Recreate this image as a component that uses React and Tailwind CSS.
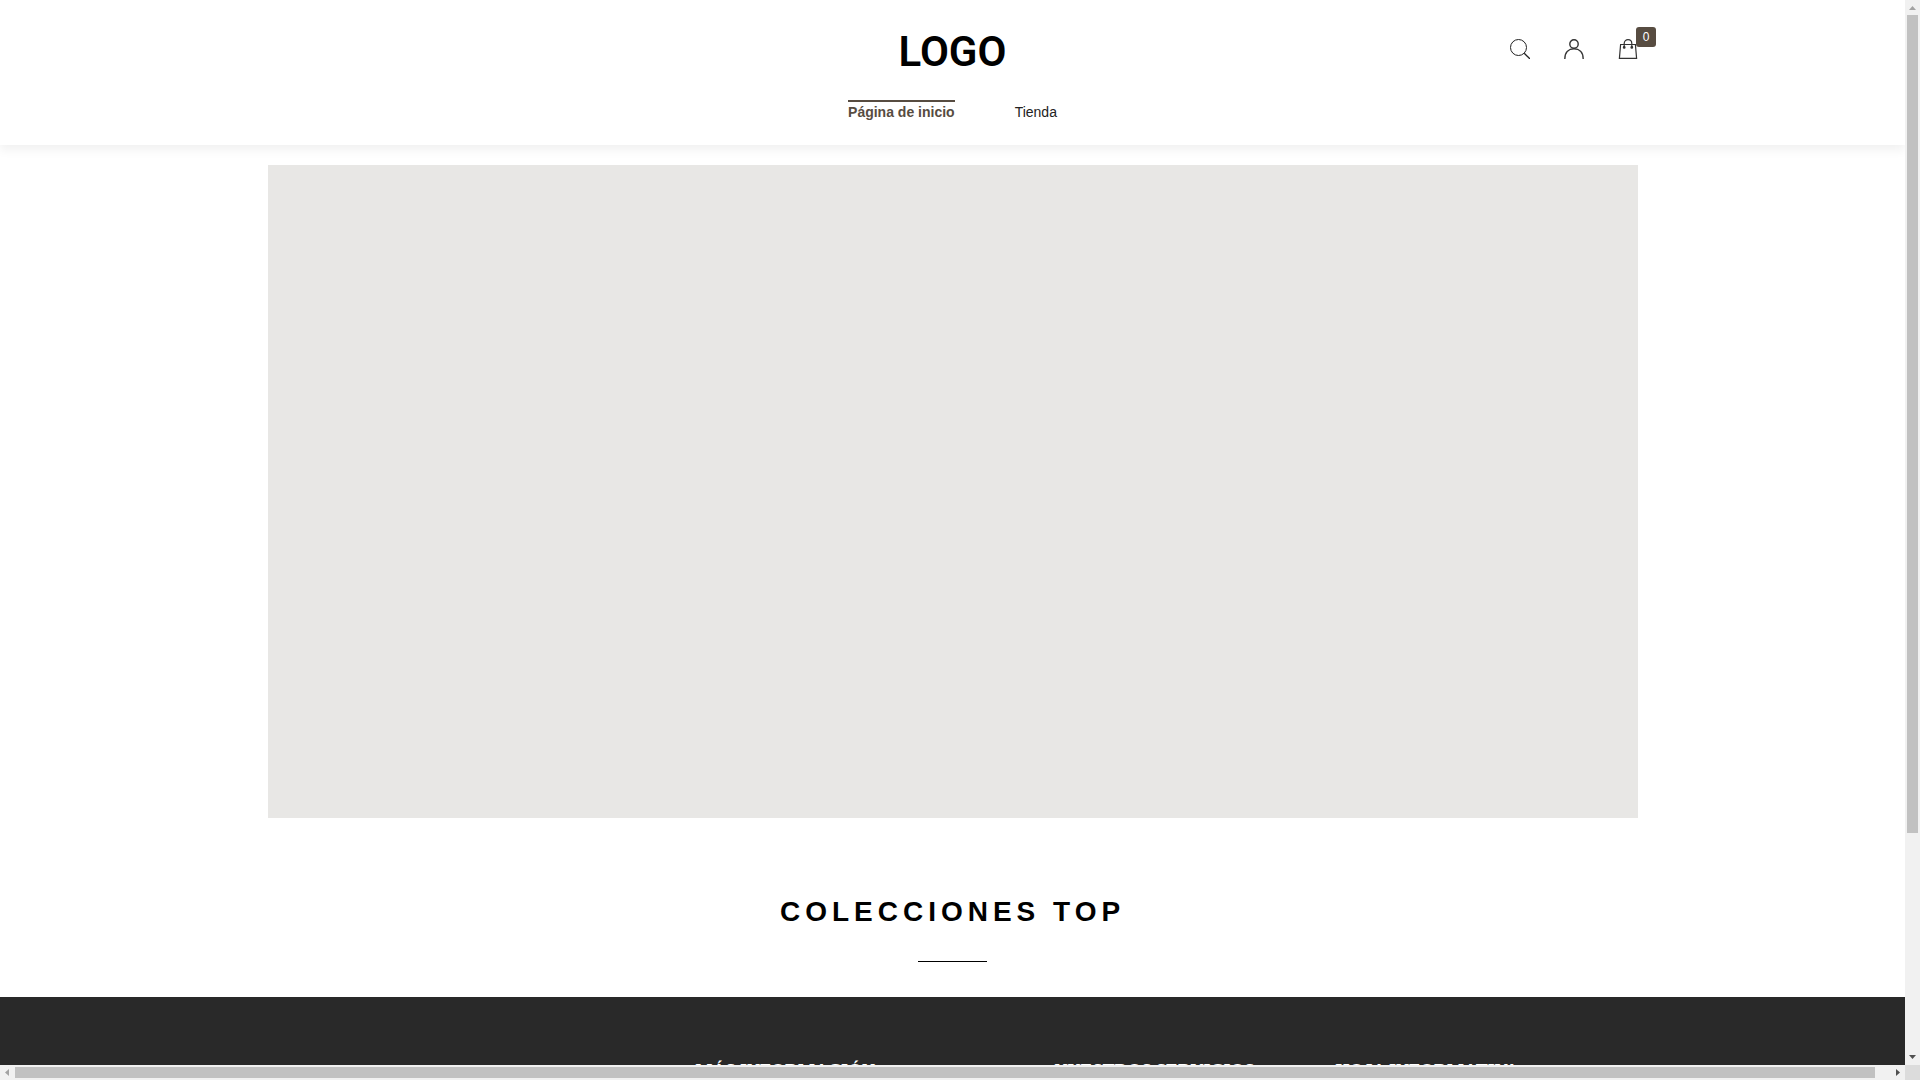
import React from 'react'

const navItems = [
  { label: 'Página de inicio', active: true },
  { label: 'Tienda', active: false },
]

const SearchIcon = () => (
  <svg width="20" height="20" viewBox="0 0 20 20" fill="none" stroke="#222" strokeWidth="1" aria-hidden="true">
    <circle cx="8.5" cy="8.5" r="8" />
    <path d="M14.2 14.2 L20 20" strokeWidth="1.3" />
  </svg>
)

const UserIcon = () => (
  <svg width="20" height="20" viewBox="0 0 20 20" fill="none" stroke="#333" strokeWidth="1.4" aria-hidden="true">
    <circle cx="10" cy="5" r="4.2" />
    <path d="M0.8 20 C0.8 13 5 9.8 10 9.8 C15 9.8 19.2 13 19.2 20" />
  </svg>
)

const BagIcon = () => (
  <svg width="20" height="20" viewBox="0 0 20 20" fill="none" stroke="#333" strokeWidth="1.2" aria-hidden="true">
    <path d="M2.6 5.5 H17.4 L18.6 19.4 H1.4 Z" />
    <path d="M6.2 8.5 V4.5 C6.2 -0.7 13.8 -0.7 13.8 4.5 V8.5" />
    <circle cx="6.2" cy="8.4" r="0.8" fill="#333" />
    <circle cx="13.8" cy="8.4" r="0.8" fill="#333" />
  </svg>
)

const Header = () => (
  <header className="relative h-[145px] shrink-0 bg-white shadow-[0_5px_10px_rgba(0,0,0,0.06)]">
    <div className="mx-auto grid max-w-[1371px] grid-cols-3 items-start">
      <span />
      <a href="#inicio" className="mt-[26px] h-[52px] text-center font-['Roboto',sans-serif] text-[42px] leading-[52px] font-semibold text-black">
        LOGO
      </a>
      <div className="mt-[39px] flex justify-end gap-[34px]">
        <button type="button" aria-label="Buscar"><SearchIcon /></button>
        <button type="button" aria-label="Mi cuenta"><UserIcon /></button>
        <button type="button" aria-label="Carrito" className="relative">
          <BagIcon />
          <span className="absolute -top-3 left-[18px] h-5 w-5 rounded-[3px] bg-[#574c41] text-center text-xs leading-5 text-white">
            0
          </span>
        </button>
      </div>
    </div>
    <nav className="mt-[22px] flex justify-center gap-[60px] text-sm leading-5">
      {navItems.map((item) => (
        <a
          key={item.label}
          href="#"
          className={item.active
            ? 'border-t-2 border-[#574c41] font-bold text-[#574c41]'
            : 'border-t-2 border-transparent text-[#222]'}
        >
          {item.label}
        </a>
      ))}
    </nav>
  </header>
)

const Footer = () => (
  <footer className="bg-[#292929] font-['Liberation_Serif',serif] text-lg leading-5 font-bold text-white">
    <div className="mx-auto grid max-w-[1370px] grid-cols-[428fr_359fr_281fr_302fr] pt-16">
      <span />
      <h3>MÁS INFORMACIÓN</h3>
      <h3>NUESTROS SERVICIOS</h3>
      <h3>HOJA INFORMATIVA</h3>
    </div>
  </footer>
)

const VerticalBar = () => (
  <div className="flex flex-col items-center justify-between bg-[#f1f1f1]">
    <svg width="15" height="15" viewBox="0 0 15 15" fill="#a3a3a3"><path d="M7.5 6 L11 10 H4 Z" /></svg>
    <div className="w-[11px] flex-1">
      <div className="h-[79%] bg-[#c1c1c1]" />
    </div>
    <svg width="15" height="15" viewBox="0 0 15 15" fill="#505050"><path d="M4 5 H11 L7.5 9 Z" /></svg>
  </div>
)

const HorizontalBar = () => (
  <div className="flex items-center justify-between bg-[#f1f1f1]">
    <svg width="15" height="15" viewBox="0 0 15 15" fill="#a3a3a3"><path d="M9 4 V11 L5 7.5 Z" /></svg>
    <div className="h-[11px] flex-1 pr-[15px]">
      <div className="h-full bg-[#c1c1c1]" />
    </div>
    <svg width="15" height="15" viewBox="0 0 15 15" fill="#505050"><path d="M6 4 V11 L10 7.5 Z" /></svg>
  </div>
)

const App = () => (
  <div className="grid h-screen grid-cols-[minmax(0,1fr)_15px] grid-rows-[minmax(0,1fr)_15px] bg-white font-['Liberation_Sans',Arial,sans-serif]">
    <div className="overflow-hidden">
      <Header />
      <main>
        <section className="mx-auto mt-5 h-[653px] max-w-[1370px] bg-[#e8e7e5]" aria-label="Destacados" />
        <section className="flex flex-col items-center pt-[74px] pb-[35px]">
          <h2 className="text-[28px] leading-10 font-bold tracking-[5px] text-black">COLECCIONES TOP</h2>
          <div className="mt-[29px] h-px w-[69px] bg-black" />
        </section>
      </main>
      <Footer />
    </div>
    <VerticalBar />
    <HorizontalBar />
    <div className="bg-[#dcdcdc]" />
  </div>
)

export default App
